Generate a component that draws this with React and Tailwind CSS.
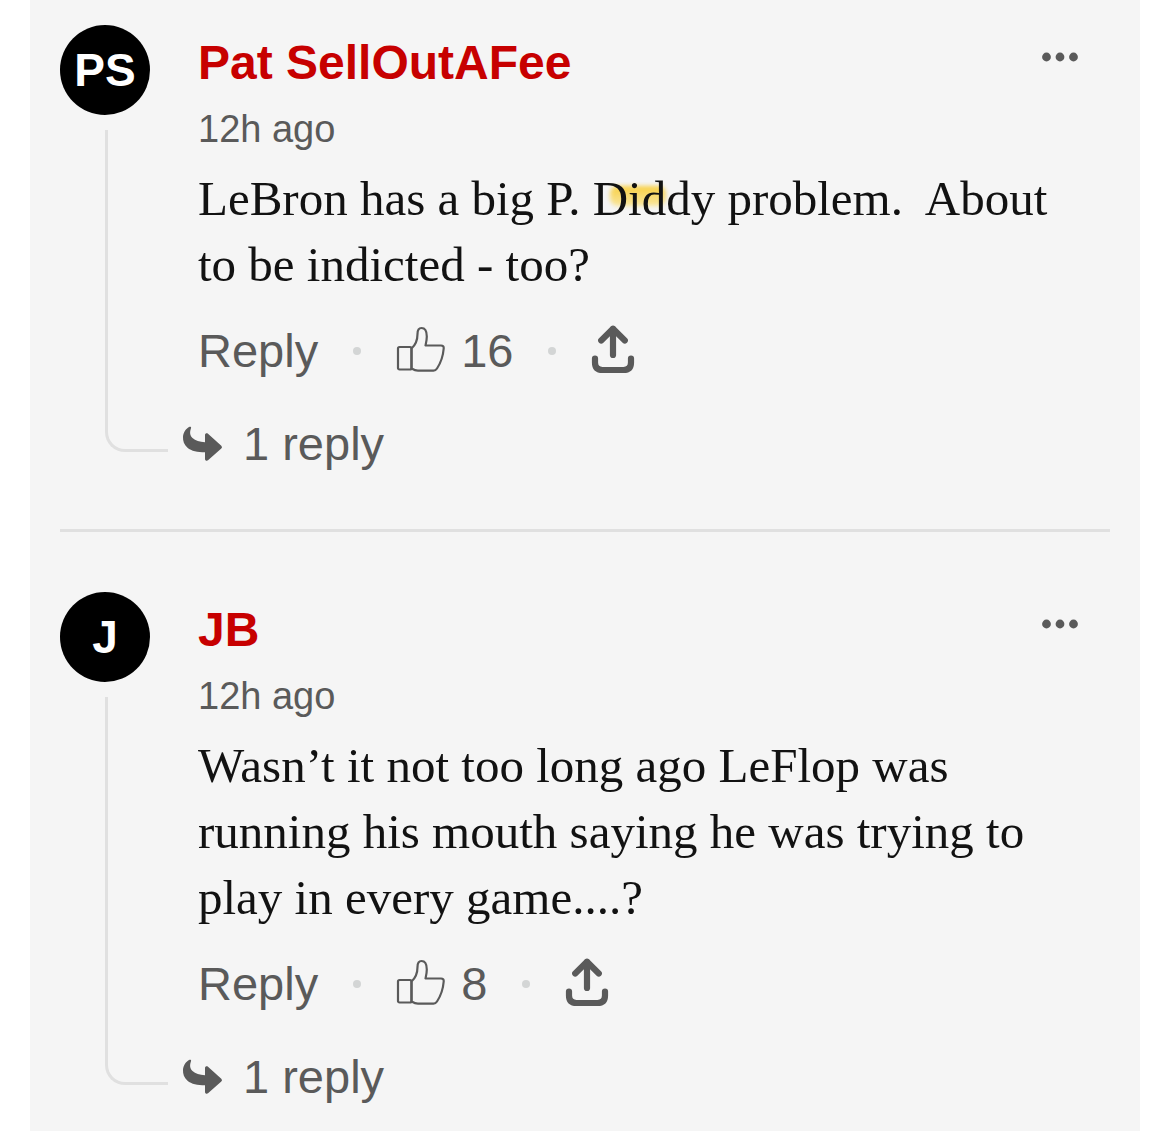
import React from "react";

const comments = [
  {
    id: 1,
    initials: "PS",
    author: "Pat SellOutAFee",
    time: "12h ago",
    likes: 16,
    replies: "1 reply",
    body: "LeBron has a big P. Diddy problem.\u00a0 About to be indicted - too?",
    marked: true,
  },
  {
    id: 2,
    initials: "J",
    author: "JB",
    time: "12h ago",
    likes: 8,
    replies: "1 reply",
    body: "Wasn’t it not too long ago LeFlop was running his mouth saying he was trying to play in every game....?",
  },
];

// Marker stroke painted behind the comment text
function Highlight() {
  return (
    <span
      aria-hidden="true"
      className="absolute -z-10 left-[412px] top-5 w-14 h-5 rounded-lg bg-gradient-to-b from-[#f8cf3a] to-[#f8e59a] blur-[2px]"
    />
  );
}

function MoreIcon() {
  return (
    <svg width="36" height="10" viewBox="0 0 36 10" fill="currentColor" aria-hidden="true">
      <circle cx="4.5" cy="5" r="4.4" />
      <circle cx="18" cy="5" r="4.4" />
      <circle cx="31.5" cy="5" r="4.4" />
    </svg>
  );
}

function LikeIcon() {
  return (
    <svg
      width="49"
      height="46"
      viewBox="0 0 49 46"
      fill="none"
      stroke="currentColor"
      strokeWidth="2.2"
      strokeLinejoin="round"
      aria-hidden="true"
    >
      <rect x="2" y="21" width="13.5" height="22.5" rx="1.5" />
      <path d="M15.5 22.5C20 18.5 21.5 14 21.5 8C21.5 4.5 23 2 25.5 2C29 2 30.8 5.5 30.8 10.5C30.8 14 30 17 29.5 19.5H45C47 19.5 47.9 20.5 47.7 22.5C47 31 44 38 41 42.5C40 44 39 44.7 37.5 44.7H22C19.5 44.7 18 44 15.5 42.5Z" />
    </svg>
  );
}

function ShareIcon() {
  return (
    <svg
      width="44"
      height="50"
      viewBox="0 0 44 50"
      fill="none"
      stroke="currentColor"
      strokeWidth="6.2"
      strokeLinecap="round"
      strokeLinejoin="round"
      aria-hidden="true"
    >
      <path d="M22 31V5" />
      <path d="M10.2 16.5L22 4.7L33.8 16.5" />
      <path d="M4 34.5V38.5Q4 46 11.5 46H32.5Q40 46 40 38.5V34.5" />
    </svg>
  );
}

function ReplyArrowIcon() {
  return (
    <svg width="41" height="36" viewBox="0 0 41 36" fill="currentColor" aria-hidden="true">
      <path d="M7.5 .8C8.5 .3 9.500 1 9 2.2C7.6 6 7.8 9.5 10.5 12C13.5 14.8 17.5 16 23 16.2V9C23 7.4 24.8 6.8 26 7.8L39.3 19.8Q40.8 21.2 39.3 22.6L26 34.3C24.8 35.3 23 34.6 23 33V26.3C15.5 26.3 9.5 25 5.5 21.7C2 18.8 .8 14.8 1 11C1.2 6.5 4 2.6 7.5 .8Z" />
    </svg>
  );
}

function Dot() {
  return <span className="size-2 rounded-full bg-[#d3d5d5]" />;
}

function Comment({ comment }) {
  return (
    <article className="flex pt-[60px] pb-[55px] first:pt-[25px] last:pb-5 border-b-[3px] last:border-b-0 border-[#e0e0e0]">
      <div className="w-[108px] shrink-0 flex flex-col">
        <div className="size-[90px] shrink-0 rounded-full bg-black text-white text-[46px] font-bold flex items-center justify-center">
          {comment.initials}
        </div>
        {/* Thread line down to the replies */}
        <div className="mt-[15px] mb-[22px] ml-[45px] grow rounded-bl-[20px] border-l-[3px] border-b-[3px] border-[#e0e0e0]" />
      </div>

      <div className="grow min-w-0">
        <div className="pl-[30px]">
          <header className="flex items-center justify-between pt-[10px] pr-8">
            <h2 className="text-[48px] leading-[56px] font-bold text-[#c70000]">
              <a href="#author">{comment.author}</a>
            </h2>
            <button type="button" aria-label="More options" className="pb-3">
              <MoreIcon />
            </button>
          </header>
          <p className="mt-[10px] text-[38px] leading-[56px]">{comment.time}</p>
          <p className="relative isolate mt-[9px] pr-8 font-['Liberation_Serif',serif] text-[49px] leading-[66px] text-[#121212]">
            {comment.marked && <Highlight />}
            {comment.body}
          </p>
          <div className="mt-[23px] flex items-center gap-[35px] text-[47px] leading-[60px]">
            <button type="button">Reply</button>
            <Dot />
            <button type="button" aria-label="Like" className="flex items-center gap-4">
              <span className="pb-1">
                <LikeIcon />
              </span>
              {comment.likes}
            </button>
            <Dot />
            <button type="button" aria-label="Share" className="pb-1">
              <ShareIcon />
            </button>
          </div>
        </div>
        <button type="button" className="mt-[33px] ml-[14px] flex items-center gap-5 text-[47px] leading-[60px]">
          <ReplyArrowIcon />
          {comment.replies}
        </button>
      </div>
    </article>
  );
}

export default function App() {
  return (
    <div className="min-h-screen bg-white px-[30px] font-['Liberation_Sans',Arial,sans-serif] text-[#5a5a5a]">
      <main className="min-h-screen bg-[#f5f5f5] px-[30px]">
        {comments.map((comment) => (
          <Comment key={comment.id} comment={comment} />
        ))}
      </main>
    </div>
  );
}
